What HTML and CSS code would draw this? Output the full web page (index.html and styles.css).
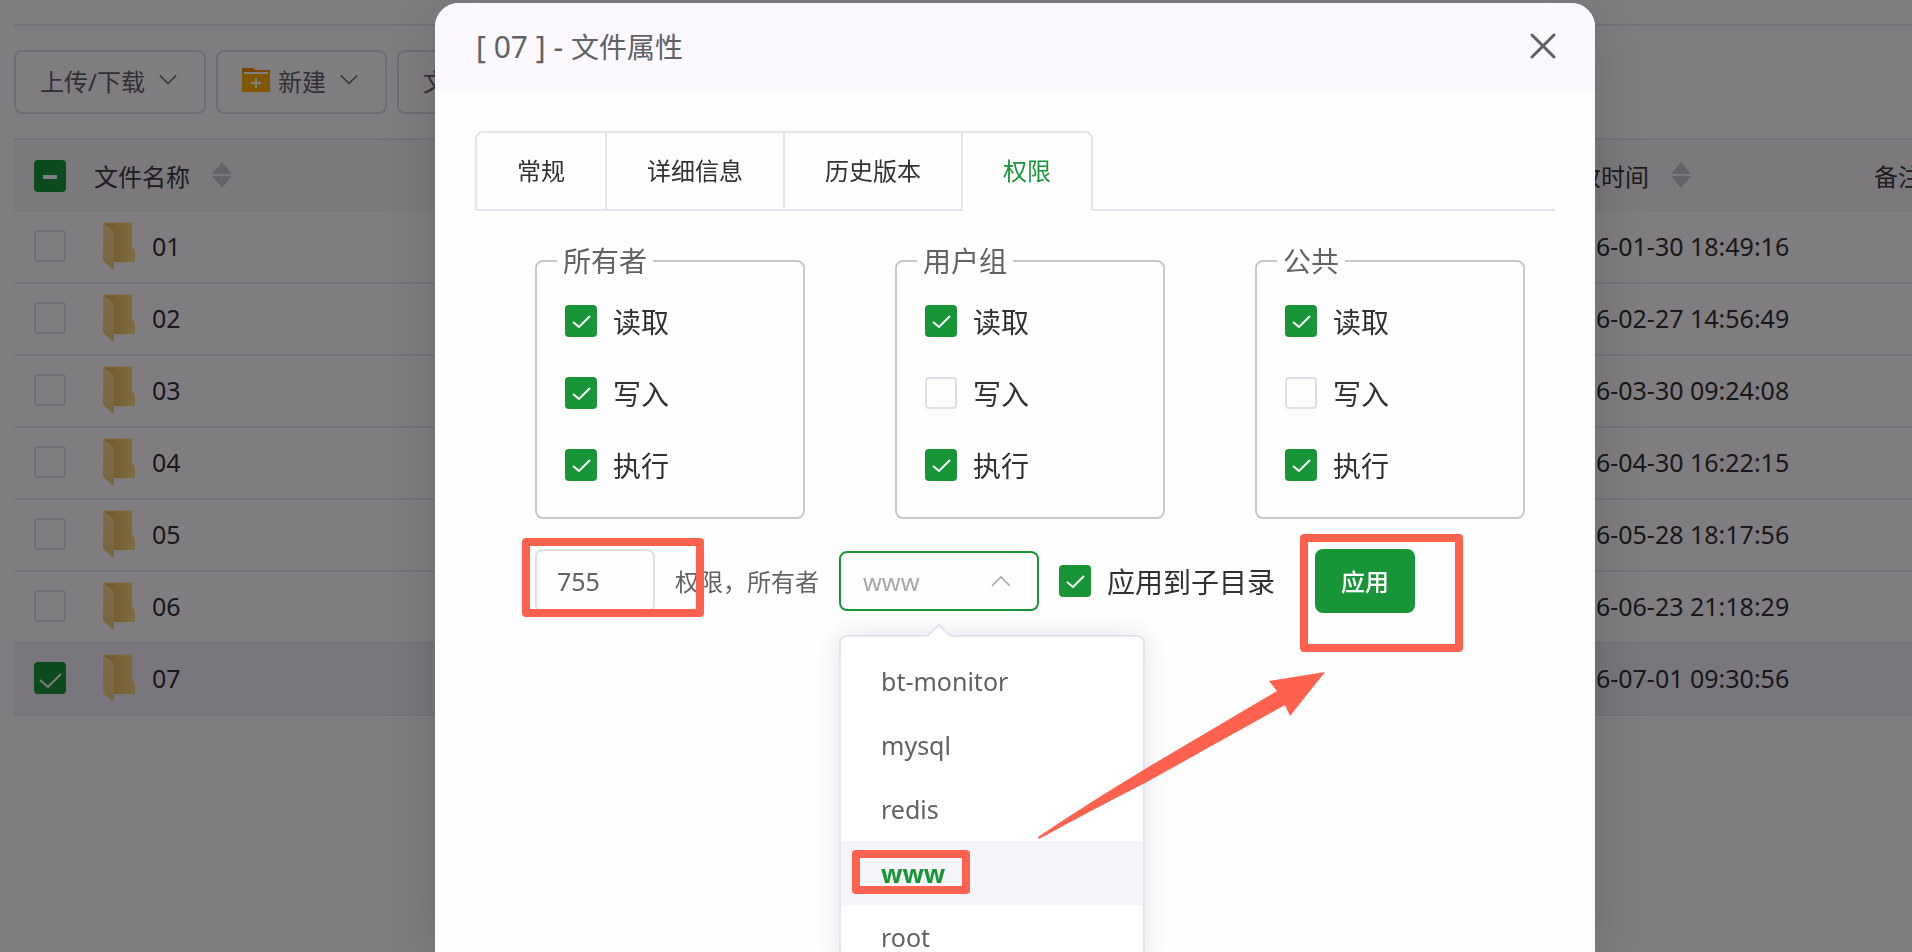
FILE: index.html
```html
<!DOCTYPE html>
<html lang="zh-CN">
<head>
<meta charset="utf-8">
<title>文件属性</title>
<link rel="stylesheet" href="styles.css">
</head>
<body>
<svg class="defs" aria-hidden="true">
  <defs>
    <linearGradient id="back" x1="0" y1="0" x2="1" y2="0"><stop offset="0" stop-color="#e0ae50"/><stop offset="1" stop-color="#f8d880"/></linearGradient>
    <linearGradient id="flap" x1="0" y1="0" x2="0" y2="1"><stop offset="0" stop-color="#f8dc94"/><stop offset="1" stop-color="#f2cc7c"/></linearGradient>
    <symbol id="folder" viewBox="0 0 32 48">
      <path d="M1 1H29V24L32 30V40H8Z" fill="url(#back)"/>
      <path d="M1 1H29" stroke="#fbd46a" stroke-width="1"/>
      <path d="M0 1L7 6Q11 9 11 13V47H9L0 39Z" fill="url(#flap)"/>
    </symbol>
    <symbol id="down" viewBox="0 0 20 12"><path d="M1 1L10 10L19 1" fill="none" stroke="currentColor" stroke-width="1.6"/></symbol>
    <symbol id="sort" viewBox="0 0 20 26"><path d="M10 0L20 12H0ZM0 14H20L10 26Z" fill="#c8c6cc"/></symbol>
  </defs>
</svg>

<main class="page">
  <div class="toolbar">
    <button class="tool" type="button">上传/下载<svg class="chev chev-tool"><use href="#down"/></svg></button>
    <button class="tool" type="button"><svg class="newicon" viewBox="0 0 28 24"><path d="M0 0H11L13 2H28V24H0Z" fill="#ffb000"/><path d="M0 0H11L13 2H28V4H0Z" fill="#f08c00"/><path d="M2 5H26" stroke="#fff" stroke-width="2"/><path d="M14 10V20M9 15H19" stroke="#fff" stroke-width="2"/></svg>新建<svg class="chev chev-tool"><use href="#down"/></svg></button>
    <button class="tool" type="button">文件</button>
  </div>
  <table class="files">
    <colgroup><col class="c-check"><col><col class="c-time"><col class="c-note"></colgroup>
    <thead>
      <tr>
        <th><input class="box box-part" type="checkbox" aria-label="全选"></th>
        <th><span class="head">文件名称<svg class="sort"><use href="#sort"/></svg></span></th>
        <th><span class="head">修改时间<svg class="sort"><use href="#sort"/></svg></span></th>
        <th><span class="head">备注</span></th>
      </tr>
    </thead>
    <tbody>
      <tr><td><input class="box" type="checkbox" aria-label="01"></td><td><span class="file"><svg class="folder"><use href="#folder"/></svg>01</span></td><td>2026-01-30 18:49:16</td><td></td></tr>
      <tr><td><input class="box" type="checkbox" aria-label="02"></td><td><span class="file"><svg class="folder"><use href="#folder"/></svg>02</span></td><td>2026-02-27 14:56:49</td><td></td></tr>
      <tr><td><input class="box" type="checkbox" aria-label="03"></td><td><span class="file"><svg class="folder"><use href="#folder"/></svg>03</span></td><td>2026-03-30 09:24:08</td><td></td></tr>
      <tr><td><input class="box" type="checkbox" aria-label="04"></td><td><span class="file"><svg class="folder"><use href="#folder"/></svg>04</span></td><td>2026-04-30 16:22:15</td><td></td></tr>
      <tr><td><input class="box" type="checkbox" aria-label="05"></td><td><span class="file"><svg class="folder"><use href="#folder"/></svg>05</span></td><td>2026-05-28 18:17:56</td><td></td></tr>
      <tr><td><input class="box" type="checkbox" aria-label="06"></td><td><span class="file"><svg class="folder"><use href="#folder"/></svg>06</span></td><td>2026-06-23 21:18:29</td><td></td></tr>
      <tr class="picked"><td><input class="box box-large" type="checkbox" aria-label="07" checked></td><td><span class="file"><svg class="folder"><use href="#folder"/></svg>07</span></td><td>2026-07-01 09:30:56</td><td></td></tr>
    </tbody>
  </table>
</main>

<div class="overlay">
  <section class="modal" role="dialog" aria-labelledby="title">
    <header class="modal-head">
      <h1 class="title" id="title"><span class="title-id">[ 07 ] - </span>文件属性</h1>
      <button class="close" type="button" aria-label="关闭"><svg viewBox="0 0 26 26" width="26" height="26"><path d="M2 2L24 24M24 2L2 24" fill="none" stroke="#5f5f63" stroke-width="3" stroke-linecap="round"/></svg></button>
    </header>
    <div class="modal-body">
      <nav class="tabs" role="tablist">
        <button class="tab" type="button" role="tab">常规</button>
        <button class="tab" type="button" role="tab">详细信息</button>
        <button class="tab" type="button" role="tab">历史版本</button>
        <button class="tab tab-on" type="button" role="tab" aria-selected="true">权限</button>
      </nav>
      <form class="panel">
        <div class="groups">
          <fieldset class="group">
            <legend>所有者</legend>
            <label class="opt"><input class="box" type="checkbox" checked>读取</label>
            <label class="opt"><input class="box" type="checkbox" checked>写入</label>
            <label class="opt"><input class="box" type="checkbox" checked>执行</label>
          </fieldset>
          <fieldset class="group">
            <legend>用户组</legend>
            <label class="opt"><input class="box" type="checkbox" checked>读取</label>
            <label class="opt"><input class="box" type="checkbox">写入</label>
            <label class="opt"><input class="box" type="checkbox" checked>执行</label>
          </fieldset>
          <fieldset class="group">
            <legend>公共</legend>
            <label class="opt"><input class="box" type="checkbox" checked>读取</label>
            <label class="opt"><input class="box" type="checkbox">写入</label>
            <label class="opt"><input class="box" type="checkbox" checked>执行</label>
          </fieldset>
        </div>
        <div class="apply-row">
          <input class="mode" id="mode" type="text" value="755">
          <label class="mode-label" for="mode">权限，所有者</label>
          <div class="owner">
            <select class="owner-select" aria-label="所有者"><option>www</option></select>
            <svg class="chev owner-chev"><use href="#down"/></svg>
            <div class="menu">
              <svg class="menu-tip" viewBox="0 0 26 13" width="26" height="13"><path d="M0 13L13 1L26 13Z" fill="#fff"/><path d="M1 12L13 1L25 12" fill="none" stroke="#e4e4ec" stroke-width="2"/></svg>
              <ul class="menu-list" role="listbox">
                <li class="item" role="option">bt-monitor</li>
                <li class="item" role="option">mysql</li>
                <li class="item" role="option">redis</li>
                <li class="item item-on" role="option" aria-selected="true">www</li>
                <li class="item" role="option">root</li>
              </ul>
            </div>
          </div>
          <label class="opt opt-sub"><input class="box" type="checkbox" checked>应用到子目录</label>
          <button class="apply" type="button">应用</button>
        </div>
      </form>
    </div>
    <svg class="marks" viewBox="0 0 1160 949" width="1160" height="949" aria-hidden="true">
      <g fill="none" stroke="#ff614f" stroke-width="8" stroke-linejoin="round">
        <rect x="91" y="539" width="174" height="71"/>
        <rect x="869" y="535" width="155" height="110"/>
        <rect x="421" y="851" width="110" height="36"/>
      </g>
      <path d="M603 834Q655 799 710 766L842 688L834 678L890 669L855 713L850 702L710 780Q655 808 604 836Z" fill="#ff614f"/>
    </svg>
  </section>
</div>
</body>
</html>
```
FILE: styles.css
```css
* { box-sizing: border-box; }
html, body { height: 100%; }
body {
  margin: 0;
  overflow: hidden;
  background: #fffaff;
  color: #303133;
  font-family: "Noto Sans", "Noto Sans CJK SC", sans-serif;
  font-size: 24px;
}
button, input, select { font: inherit; color: inherit; }
.defs { position: absolute; width: 0; height: 0; }

.page { padding: 24px 0 0 14px; }
.toolbar {
  display: flex;
  gap: 10px;
  padding: 24px 0;
  border-top: 2px solid #e6e4ee;
}
.tool {
  display: flex;
  align-items: center;
  gap: 8px;
  height: 64px;
  padding: 0 27px 4px 24px;
  border: 2px solid #dcdae4;
  border-radius: 8px;
  background: transparent;
  color: #606266;
  white-space: nowrap;
}
.chev { width: 20px; height: 12px; flex: none; }
.chev-tool { width: 18px; margin-left: 6px; }
.newicon { width: 28px; height: 24px; }

.files {
  width: 100%;
  table-layout: fixed;
  border-collapse: separate;
  border-spacing: 0;
  border-top: 2px solid #e8e5ec;
}
.c-check { width: 80px; }
.c-time { width: 321px; }
.c-note { width: 38px; }
.files th, .files td { padding: 0; text-align: left; white-space: nowrap; font-weight: 400; height: 72px; }
.files th { background: #f6f3f7; color: #3a3a3e; }
.files td { border-bottom: 2px solid #ece8ef; padding-bottom: 2px; font-size: 25px; }
.files .box { display: block; margin-left: 20px; }
.picked td { background: #f0eff6; }
.head { display: flex; align-items: center; gap: 22px; padding-bottom: 2px; }
.sort { width: 20px; height: 26px; }
.file { display: flex; align-items: center; gap: 17px; padding-left: 9px; }
.folder { width: 32px; height: 48px; }

.box {
  appearance: none;
  flex: none;
  width: 32px;
  height: 32px;
  margin: 0;
  border: 2px solid #dcdfe6;
  border-radius: 4px;
  background: transparent center / 32px 32px no-repeat;
}
.box:checked, .box-part { border-color: #189536; background-color: #189536; }
.box:checked { background-image: url("data:image/svg+xml,%3Csvg xmlns='http://www.w3.org/2000/svg' viewBox='0 0 32 32'%3E%3Cpath d='M8 17L14 22L25 11' fill='none' stroke='white' stroke-width='2'/%3E%3C/svg%3E"); }
.box-large:checked { background-image: url("data:image/svg+xml,%3Csvg xmlns='http://www.w3.org/2000/svg' viewBox='0 0 32 32'%3E%3Cpath d='M6 18L14 25L27 12' fill='none' stroke='white' stroke-width='2'/%3E%3C/svg%3E"); }
.box-part { background-image: url("data:image/svg+xml,%3Csvg xmlns='http://www.w3.org/2000/svg' viewBox='0 0 32 32'%3E%3Cpath d='M9 17H23' stroke='white' stroke-width='4'/%3E%3C/svg%3E"); }

.overlay {
  position: fixed;
  inset: 0;
  display: flex;
  padding: 3px 317px 0 435px;
  background: rgba(2, 0, 3, 0.5);
}
.modal {
  position: relative;
  flex: 1;
  border-radius: 24px 24px 0 0;
  background: #fefefe;
  box-shadow: 0 12px 60px rgba(0, 0, 0, 0.16);
}
.modal-head {
  display: flex;
  align-items: center;
  justify-content: space-between;
  height: 88px;
  padding: 0 39px 2px 41px;
  border-radius: 24px 24px 0 0;
  background: #fbf9fd;
}
.title { margin: 0; font-size: 28px; font-weight: 400; color: #606266; white-space: pre; }
.title-id { font-size: 30px; }
.close { display: flex; padding: 0; border: 0; background: none; }
.modal-body { padding: 40px 40px 0; }

.tabs { display: flex; border-bottom: 2px solid #e4e4ec; }
.tab {
  height: 78px;
  padding: 0 40px 4px;
  border: solid #e4e4ec;
  border-width: 2px 2px 0 0;
  background: none;
  white-space: nowrap;
}
.tab:first-child { border-left-width: 2px; border-top-left-radius: 8px; }
.tab-on { height: 80px; margin-bottom: -2px; padding-bottom: 6px; border-top-right-radius: 8px; background: #fefefe; color: #189536; }

.panel { padding: 30px 30px 0 60px; }
.groups { display: grid; grid-template-columns: repeat(3, 1fr); gap: 90px; }
.group {
  min-width: 0;
  margin: 0;
  padding: 4px 28px 16px;
  border: 2px solid #c8c8ca;
  border-radius: 8px;
}
.group legend { margin-left: -8px; padding: 0 6px; font-size: 28px; line-height: 40px; color: #606266; }
.opt { display: flex; align-items: center; gap: 16px; height: 72px; font-size: 28px; white-space: nowrap; }

.apply-row { display: flex; align-items: center; gap: 20px; padding-top: 30px; }
.mode {
  width: 120px;
  height: 64px;
  padding: 0 20px;
  border: 2px solid #dcdfe6;
  border-radius: 8px;
  background: none;
  font-size: 25px;
  color: #606266;
}
.mode-label { padding-bottom: 2px; color: #606266; white-space: nowrap; }
.owner { position: relative; width: 200px; height: 60px; }
.owner-select {
  appearance: none;
  width: 100%;
  height: 60px;
  padding: 0 22px;
  border: 2px solid #189536;
  border-radius: 8px;
  background: none;
  color: #a8a8ae;
}
.owner-chev { position: absolute; right: 28px; top: 24px; transform: rotate(180deg); color: #a8a8ae; }
.menu {
  position: absolute;
  top: 84px;
  left: 0;
  width: 306px;
  border: 2px solid #e4e4ec;
  border-radius: 8px;
  background: #fff;
  box-shadow: 0 0 24px rgba(40, 20, 80, 0.12);
}
.menu-tip { position: absolute; top: -13px; left: 85px; }
.menu-list { margin: 0; padding: 12px 0 0; list-style: none; }
.item { height: 64px; padding: 0 40px; font-size: 25px; line-height: 64px; color: #606266; }
.item-on { background: #f5f4f9; color: #189536; font-weight: 700; }
.opt-sub { height: 64px; }
.apply {
  width: 100px;
  height: 64px;
  margin-left: 20px;
  padding: 0 0 2px;
  border: 0;
  border-radius: 8px;
  background: #189536;
  color: #fff;
  font-weight: 500;
}
.marks { position: absolute; left: 0; top: 0; pointer-events: none; }
```
